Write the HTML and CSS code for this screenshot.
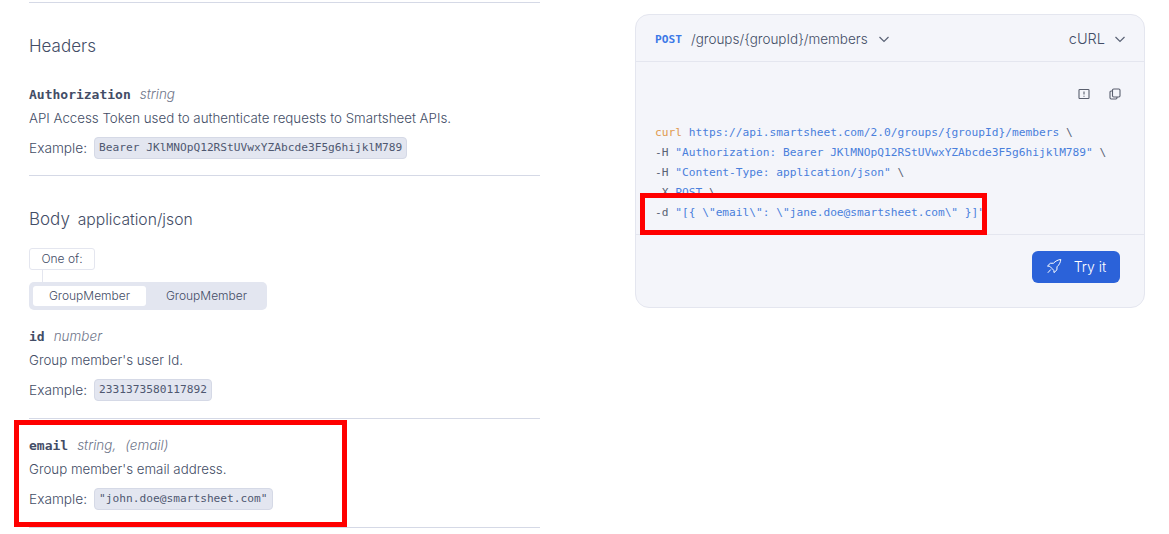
FILE: index.html
```
<!DOCTYPE html>
<html lang="en">
<head>
<meta charset="utf-8">
<title>Add group members</title>
<link rel="stylesheet" href="styles.css">
</head>
<body>
<div class="page">
  <main class="docs">
    <section class="section headers">
      <h2 class="section-title">Headers</h2>
      <div class="param">
        <div class="param-head"><code class="param-name">Authorization</code><span class="param-type">string</span></div>
        <p class="param-desc">API Access Token used to authenticate requests to Smartsheet APIs.</p>
        <div class="param-example"><span>Example:</span><code class="chip">Bearer JKlMNOpQ12RStUVwxYZAbcde3F5g6hijklM789</code></div>
      </div>
    </section>
    <section class="section body-section">
      <h2 class="section-title">Body <span class="section-sub">application/json</span></h2>
      <div class="one-of">One of:</div>
      <div class="one-of-line"></div>
      <div class="tabs">
        <div class="tab tab-active">GroupMember</div>
        <div class="tab">GroupMember</div>
      </div>
      <div class="param param-id">
        <div class="param-head"><code class="param-name">id</code><span class="param-type">number</span></div>
        <p class="param-desc">Group member's user Id.</p>
        <div class="param-example"><span>Example:</span><code class="chip">2331373580117892</code></div>
      </div>
      <div class="param param-email">
        <div class="param-head"><code class="param-name">email</code><span class="param-type">string,</span><span class="param-type">(email)</span></div>
        <p class="param-desc">Group member's email address.</p>
        <div class="param-example"><span>Example:</span><code class="chip">"john.doe@smartsheet.com"</code></div>
      </div>
    </section>
  </main>
  <aside class="card">
    <header class="card-head">
      <div class="endpoint">
        <code class="method">POST</code><span class="path">/groups/{groupId}/members</span>
        <svg class="chev" viewBox="0 0 12 12" width="12" height="12" aria-hidden="true"><path d="M1.5 4l4.5 4.5L10.500 4"/></svg>
      </div>
      <div class="lang">
        <span>cURL</span>
        <svg class="chev" viewBox="0 0 12 12" width="12" height="12" aria-hidden="true"><path d="M1.5 4l4.500 4.500L10.500 4"/></svg>
      </div>
    </header>
    <div class="card-body">
      <div class="tools">
        <svg class="tool" viewBox="0 0 12 12" width="12" height="12" aria-hidden="true"><rect x="1" y="1.500" width="10" height="9" rx="0.800"/><path d="M6 3.500v3M6 7.700v1"/></svg>
        <svg class="tool" viewBox="0 0 12 12" width="12" height="12" aria-hidden="true"><rect x="3.500" y="1" width="7.500" height="8" rx="1.200"/><path d="M3.500 3H2.200C1.500 3 1 3.500 1 4.200v5.600C1 10.500 1.500 11 2.200 11h4.600C7.500 11 8 10.500 8 9.800V9"/></svg>
      </div>
      <pre class="code"><span class="k">curl</span> <span class="s">https://api.smartsheet.com/2.0/groups/{groupId}/members</span> \
-H <span class="s">"Authorization: Bearer JKlMNOpQ12RStUVwxYZAbcde3F5g6hijklM789"</span> \
-H <span class="s">"Content-Type: application/json"</span> \
-X <span class="s">POST</span> \
-d <span class="s">"[{ \"email\": \"jane.doe@smartsheet.com\" }]"</span></pre>
    </div>
    <footer class="card-foot">
      <button class="try" type="button">
        <svg viewBox="0 0 16 16" width="16" height="16" aria-hidden="true"><path d="M6 10.500 3.800 8.300 1.500 8l2.800-2.700 3.200-.1C9.500 3 12 1.800 14.800 1.500 14.500 4.300 13.300 6.800 11 8.800l-.1 3.100-2.900 2.700-.2-2.200ZM4.800 11.500l-3 3.300"/></svg>
        <span>Try it</span>
      </button>
    </footer>
  </aside>
</div>
<div class="mark mark-email"></div>
<div class="mark mark-code"></div>
</body>
</html>
```
FILE: styles.css
```
* { box-sizing: border-box; }
html, body { margin: 0; height: 534px; overflow: hidden; background: #fff; }
body { font-family: "Inter", "Liberation Sans", sans-serif; font-weight: 300; color: #434d66; font-size: 14px; position: relative; }
.page { display: flex; align-items: flex-start; padding: 2px 24px 0 29px; }
.docs { width: 511px; flex: none; border-top: 1px solid #d5d9e6; }
.card { width: 510px; margin: 12px 0 0 95px; flex: none; background: #f4f5fa; border: 1px solid #e4e6ef; border-radius: 14px; }
.section-title { margin: 0; font-size: 17px; font-weight: 300; line-height: 24px; color: #434d66; }
.section-sub { font-size: 15.700px; margin-left: 3px; }
.headers { padding-top: 31px; padding-bottom: 16px; border-bottom: 1px solid #d5d9e6; }
.param-head { display: flex; align-items: baseline; height: 20px; gap: 9px; }
.headers .param { margin-top: 28px; }
.param-name { font-family: "DejaVu Sans Mono", monospace; font-weight: 700; font-size: 13px; color: #434d66; }
.param-type { font-style: italic; font-size: 13.500px; color: #6f768a; }
.param-desc { margin: 2px 0 0; line-height: 20px; font-size: 13.300px; }
.param-example { display: flex; align-items: center; gap: 7px; margin-top: 9px; font-size: 13.700px; line-height: 20px; }
.chip { font-family: "DejaVu Sans Mono", monospace; font-size: 11.200px; line-height: 14px; padding: 3px 4px; color: #4f5870; background: #e3e6f0; border: 1px solid #d5d9e6; border-radius: 4px; }
.body-section { padding-top: 31px; }
.one-of { width: 66px; height: 22px; margin-top: 16px; border: 1px solid #e4e6ef; border-radius: 3px; font-size: 12px; line-height: 19px; text-align: center; }
.one-of-line { width: 1px; height: 12px; margin-left: 13px; background: #e4e6ef; }
.tabs { display: flex; width: 238px; height: 28px; padding: 4px; background: #e3e6f0; border-radius: 5px; font-size: 12px; line-height: 19px; text-align: center; }
.tab { width: 113px; border-radius: 3px; }
.tab-active { background: #fff; margin-right: 4px; }
.param-id { margin-top: 18px; padding-bottom: 17px; border-bottom: 1px solid #d5d9e6; }
.param-email { padding: 18px 0 17px; border-bottom: 1px solid #d5d9e6; }
.card-head { display: flex; justify-content: space-between; align-items: center; height: 47px; padding: 2px 18px 0 19px; border-bottom: 1px solid #e4e6ef; }
.endpoint, .lang { display: flex; align-items: center; font-size: 13.500px; }
.lang { font-size: 14.500px; padding-bottom: 2px; }
.lang .chev { margin-left: 9px; margin-top: 2px; }
.method { font-family: "DejaVu Sans Mono", monospace; font-weight: 700; font-size: 11.200px; color: #3b78e7; margin-right: 9px; }
.chev { margin-left: 10px; fill: none; stroke: #5a6275; stroke-width: 1.200; }
.card-body { height: 173px; padding: 26px 19px 0; border-bottom: 1px solid #e4e6ef; }
.tools { display: flex; justify-content: flex-end; gap: 19px; padding-right: 4px; }
.tool { fill: none; stroke: #5a5f6e; stroke-width: 1.100; }
.code { margin: 23px 0 0; font-family: "DejaVu Sans Mono", monospace; font-size: 11.200px; line-height: 20px; color: #5a6275; }
.k { color: #e09a4f; }
.s { color: #4a7fdc; }
.card-foot { display: flex; justify-content: flex-end; height: 72px; padding: 16px 24px 0; }
.try { display: flex; align-items: center; justify-content: center; gap: 12px; width: 88px; height: 32px; padding: 0 0 2px; border: 0; border-radius: 6px; background: #2b62d9; color: #fff; font: 300 14px "Inter", "Liberation Sans", sans-serif; }
.try svg { fill: none; stroke: #fff; stroke-width: 1; }
.mark { position: absolute; border: 5px solid #f00; }
.mark-email { left: 14px; top: 420px; width: 333px; height: 107px; }
.mark-code { left: 640px; top: 193px; width: 347px; height: 42px; }
```
